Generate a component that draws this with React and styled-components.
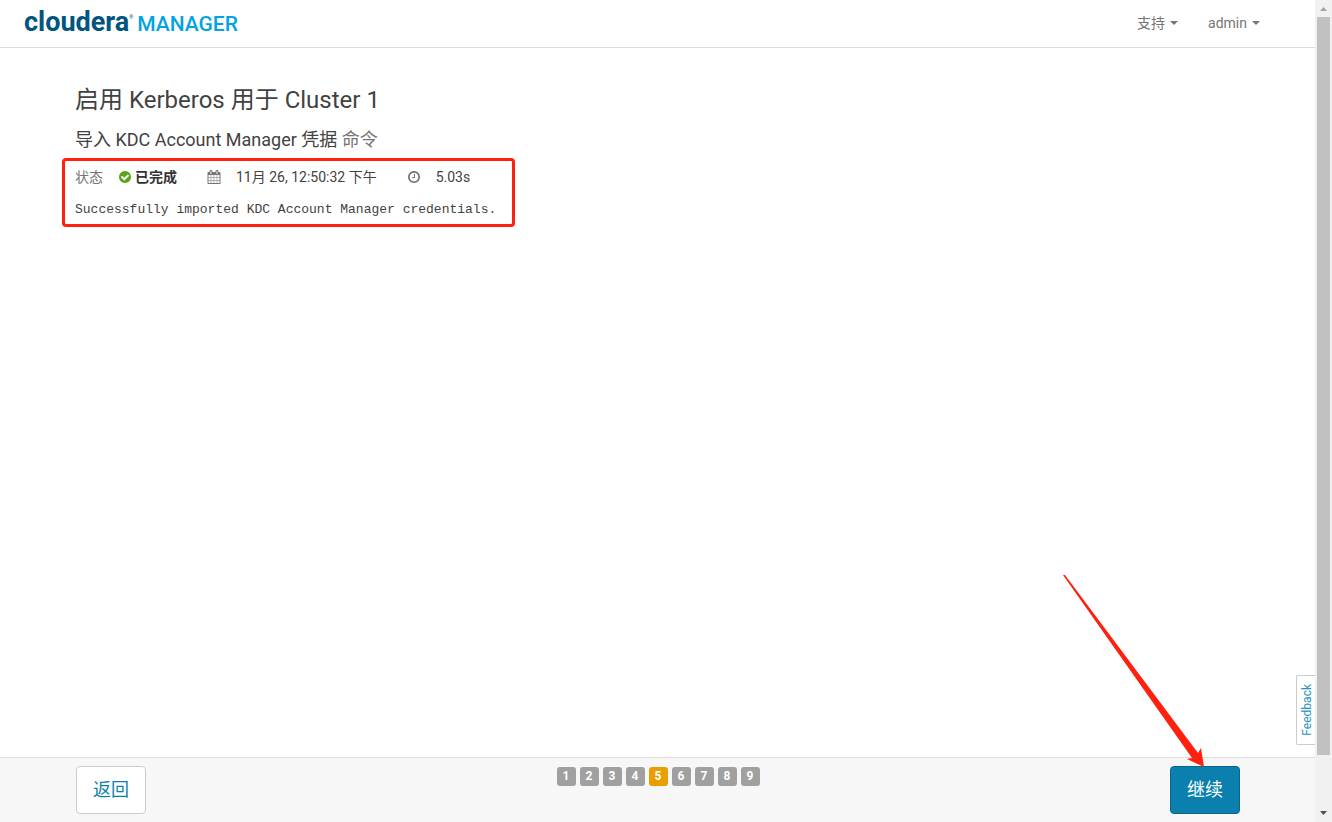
import styled, { createGlobalStyle } from 'styled-components'

const GlobalStyle = createGlobalStyle`
    * {
        box-sizing: border-box;
    }
    body {
        margin: 0;
        background: #ffffff;
        color: #424242;
        font-family: Roboto, "Noto Sans CJK SC", sans-serif;
        font-size: 14px;
        line-height: 20px;
    }
    button {
        font-family: inherit;
        cursor: pointer;
    }
`

const Shell = styled.div`
    display: flex;
    height: 100vh;
`

const Page = styled.div`
    position: relative;
    flex: 1;
    min-width: 0;
    display: flex;
    flex-direction: column;
`

const Header = styled.header`
    display: flex;
    align-items: center;
    justify-content: space-between;
    height: 48px;
    padding: 0 55px 2px 24px;
    border-bottom: 1px solid #dddddd;
`

const Logo = styled.a`
    display: flex;
    align-items: baseline;
    text-decoration: none;
    line-height: 28px;
`

const Brand = styled.span`
    font-weight: 700;
    font-size: 27px;
    color: #00557f;

    sup {
        font-size: 5px;
        line-height: 5px;
        vertical-align: 12px;
    }
`

const Product = styled.span`
    margin-left: 4px;
    font-weight: 500;
    font-size: 21px;
    color: #00a4e0;
`

const Menu = styled.nav`
    display: flex;
    gap: 30px;
`

const MenuButton = styled.button`
    display: flex;
    align-items: center;
    gap: 5px;
    padding: 0;
    border: 0;
    background: none;
    color: #757575;
    font-size: 14px;
    line-height: 20px;

    &::after {
        content: "";
        border-top: 4px solid #757575;
        border-left: 4px solid transparent;
        border-right: 4px solid transparent;
    }
`

const Main = styled.main`
    flex: 1;
    padding: 36px 75px 0;
`

const Title = styled.h1`
    margin: 0;
    font-size: 24px;
    line-height: 32px;
    font-weight: 400;
`

const SubTitle = styled.h2`
    margin: 12px 0 6px;
    font-size: 18px;
    line-height: 24px;
    font-weight: 400;

    small {
        font-size: 18px;
        color: #757575;
    }
`

const ResultBox = styled.section`
    width: fit-content;
    margin-left: -13px;
    padding: 6px 16px 4px 10px;
    border: 3px solid #ff2010;
    border-radius: 4px;
`

const StatusRow = styled.div`
    display: flex;
    align-items: center;
    gap: 30px;
`

const StatusItem = styled.div`
    display: flex;
    align-items: center;
    gap: 15px;
`

const Label = styled.span`
    color: #757575;
`

const Done = styled.strong`
    display: flex;
    align-items: center;
    gap: 3px;
    font-weight: 700;
    color: #333333;
`

const Glyph = styled.svg`
    width: 14px;
    height: 14px;
    fill: ${({ $color }) => $color || '#757575'};
`

const Output = styled.pre`
    margin: 13px 0 0;
    font-family: "Liberation Mono", monospace;
    font-size: 13px;
    line-height: 20px;
`

const Footer = styled.footer`
    display: flex;
    align-items: flex-start;
    justify-content: space-between;
    height: 65px;
    padding: 8px 75px 8px 76px;
    border-top: 1px solid #dddddd;
    background: #f7f7f7;
`

const StepButton = styled.button`
    width: 70px;
    height: 48px;
    padding: 0;
    border: 1px solid ${({ $primary }) => ($primary ? '#08648b' : '#cccccc')};
    border-radius: 4px;
    background: ${({ $primary }) => ($primary ? '#0b7fad' : '#ffffff')};
    color: ${({ $primary }) => ($primary ? '#ffffff' : '#0b7fad')};
    font-size: 18px;
    line-height: 24px;
`

const Steps = styled.ol`
    display: flex;
    gap: 4px;
    margin: 1px 0 0;
    padding: 0;
    list-style: none;
`

const Step = styled.li`
    width: 19px;
    height: 19px;
    border-radius: 3px;
    background: ${({ $active }) => ($active ? '#e99f00' : '#a0a0a0')};
    color: #ffffff;
    font-size: 12px;
    font-weight: 700;
    line-height: 19px;
    text-align: center;
`

const Feedback = styled.button`
    position: absolute;
    right: 0;
    bottom: 77px;
    width: 19px;
    height: 70px;
    padding: 0 0 0 3px;
    border: 1px solid #cccccc;
    border-right: 0;
    border-radius: 2px 0 0 2px;
    background: #ffffff;
    color: #2a94bd;
    font-size: 12px;
    line-height: 15px;
    writing-mode: sideways-lr;
    text-align: center;
`

const Arrow = styled.svg`
    position: absolute;
    right: 110px;
    bottom: 54px;
    width: 142px;
    height: 194px;
    fill: #ff2010;
    pointer-events: none;
`

const ScrollTrack = styled.div`
    display: flex;
    flex-direction: column;
    align-items: center;
    width: 17px;
    background: #f1f1f1;
`

const ScrollThumb = styled.div`
    flex: 1;
    width: 13px;
    margin-bottom: 50px;
    background: #c1c1c1;
`

const ScrollArrow = styled.svg`
    width: 17px;
    height: 17px;
    fill: ${({ $dim }) => ($dim ? '#a3a3a3' : '#505050')};
`

const CheckIcon = () => (
    <Glyph viewBox="0 0 1792 1792" $color="#5ba51b" aria-hidden="true">
        <path d="M1412 734q0-28-18-46l-91-90q-19-19-45-19t-45 19l-408 407-226-226q-19-19-45-19t-45 19l-91 90q-18 18-18 46 0 27 18 45l362 362q19 19 45 19 27 0 46-19l543-543q18-18 18-45zm252 162q0 209-103 385.5t-279.5 279.5-385.5 103-385.5-103-279.5-279.5-103-385.5 103-385.5 279.5-279.5 385.5-103 385.5 103 279.5 279.5 103 385.5z" />
    </Glyph>
)

const CalendarIcon = () => (
    <Glyph viewBox="0 0 1792 1792" aria-hidden="true">
        <path
            fillRule="evenodd"
            d="M192 1664h288v-288h-288zM544 1664h320v-288h-320zM192 1312h288v-320h-288zM544 1312h320v-320h-320zM192 928h288v-288h-288zM928 1664h320v-288h-320zM544 928h320v-288h-320zM1312 1664h288v-288h-288zM928 1312h320v-320h-320zM576 480v-288q0-13-9.5-22.5t-22.5-9.5h-64q-13 0-22.5 9.5t-9.5 22.5v288q0 13 9.5 22.5t22.5 9.5h64q13 0 22.5-9.5t9.5-22.5zM1312 1312h288v-320h-288zM928 928h320v-288h-320zM1312 928h288v-288h-288zM1344 480v-288q0-13-9.5-22.5t-22.5-9.5h-64q-13 0-22.5 9.5t-9.5 22.5v288q0 13 9.5 22.5t22.5 9.5h64q13 0 22.5-9.5t9.5-22.5zM1728 384v1280q0 52-38 90t-90 38h-1408q-52 0-90-38t-38-90v-1280q0-52 38-90t90-38h128v-96q0-66 47-113t113-47h64q66 0 113 47t47 113v96h384v-96q0-66 47-113t113-47h64q66 0 113 47t47 113v96h128q52 0 90 38t38 90z"
        />
    </Glyph>
)

const ClockIcon = () => (
    <Glyph viewBox="0 0 1792 1792" aria-hidden="true">
        <path d="M1024 544v448q0 14-9 23t-23 9h-320q-14 0-23-9t-9-23v-64q0-14 9-23t23-9h224v-352q0-14 9-23t23-9h64q14 0 23 9t9 23zm416 352q0-148-73-273t-198-198-273-73-273 73-198 198-73 273 73 273 198 198 273 73 273-73 198-198 73-273zm224 0q0 209-103 385.5t-279.5 279.5-385.5 103-385.5-103-279.5-279.5-103-385.5 103-385.5 279.5-279.5 385.5-103 385.5 103 279.5 279.5 103 385.5z" />
    </Glyph>
)

const steps = [1, 2, 3, 4, 5, 6, 7, 8, 9]

const App = () => {
    return (
        <>
            <GlobalStyle />
            <Shell>
                <Page>
                    <Header>
                        <Logo href="#">
                            <Brand>cloudera<sup>®</sup></Brand>
                            <Product>MANAGER</Product>
                        </Logo>
                        <Menu>
                            <MenuButton>支持</MenuButton>
                            <MenuButton>admin</MenuButton>
                        </Menu>
                    </Header>

                    <Main>
                        <Title>启用 Kerberos 用于 Cluster 1</Title>
                        <SubTitle>
                            导入 KDC Account Manager 凭据 <small>命令</small>
                        </SubTitle>
                        <ResultBox>
                            <StatusRow>
                                <StatusItem>
                                    <Label>状态</Label>
                                    <Done><CheckIcon />已完成</Done>
                                </StatusItem>
                                <StatusItem>
                                    <CalendarIcon />
                                    <span>11月 26, 12:50:32 下午</span>
                                </StatusItem>
                                <StatusItem>
                                    <ClockIcon />
                                    <span>5.03s</span>
                                </StatusItem>
                            </StatusRow>
                            <Output>Successfully imported KDC Account Manager credentials.</Output>
                        </ResultBox>
                    </Main>

                    <Footer>
                        <StepButton>返回</StepButton>
                        <Steps>
                            {steps.map((n) => (
                                <Step key={n} $active={n === 5}>{n}</Step>
                            ))}
                        </Steps>
                        <StepButton $primary>继续</StepButton>
                    </Footer>

                    <Feedback>Feedback</Feedback>
                    <Arrow viewBox="0 0 142 194" aria-hidden="true">
                        <path d="M0 1L2 1L135 179L138 174L141 193L124 185L129 184Z" />
                    </Arrow>
                </Page>

                <ScrollTrack>
                    <ScrollArrow viewBox="0 0 17 17" $dim>
                        <path d="M5 11L8.5 7L12 11Z" />
                    </ScrollArrow>
                    <ScrollThumb />
                    <ScrollArrow viewBox="0 0 17 17">
                        <path d="M5 6L8.5 10L12 6Z" />
                    </ScrollArrow>
                </ScrollTrack>
            </Shell>
        </>
    )
}

export default App
